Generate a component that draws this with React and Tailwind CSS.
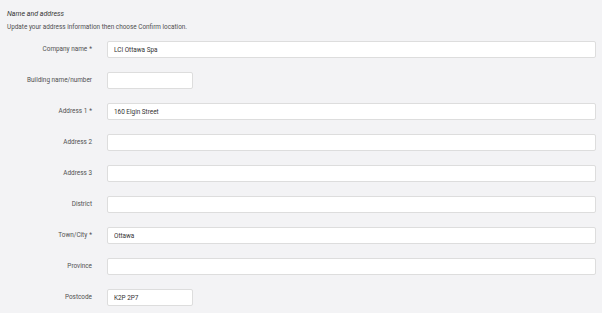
import React from 'react';

const fields = [
  { label: 'Company name', required: true, value: 'LCI Ottawa Spa' },
  { label: 'Building name/number', short: true, value: '' },
  { label: 'Address 1', required: true, value: '160 Elgin Street' },
  { label: 'Address 2', value: '' },
  { label: 'Address 3', value: '' },
  { label: 'District', value: '' },
  { label: 'Town/City', required: true, value: 'Ottawa' },
  { label: 'Province', value: '' },
  { label: 'Postcode', short: true, value: 'K2P 2P7' },
];

const Field = ({ label, required, value, short }) => (
  <div className="flex items-center h-[17px]">
    <label className="w-[92px] shrink-0 text-right text-[#505050]">
      {label}
      {required && <span className="ml-[2px]">*</span>}
    </label>
    <input
      readOnly
      value={value}
      className={`ml-[15px] h-[17px] bg-white border border-[#dddddd] rounded-[2px] px-[6px] text-[#333] text-[6.4px] outline-none ${
        short ? 'w-[86px]' : 'w-[489px]'
      }`}
    />
  </div>
);

export default function App() {
  return (
    <div
      className="w-[602px] h-[313px] bg-[#f3f3f5] overflow-hidden text-[6.4px] text-[#505050]"
      style={{ fontFamily: 'Roboto, "Liberation Sans", sans-serif' }}
    >
      <div className="pl-[7px] pt-[9px]">
        <h2 className="italic text-[7px] text-[#333] leading-[10px]">Name and address</h2>
        <p className="mt-[3px] leading-[10px]">Update your address information then choose Confirm location.</p>
      </div>
      <div className="mt-[9px] flex flex-col gap-[14px]">
        {fields.map((f) => (
          <Field key={f.label} {...f} />
        ))}
      </div>
    </div>
  );
}
